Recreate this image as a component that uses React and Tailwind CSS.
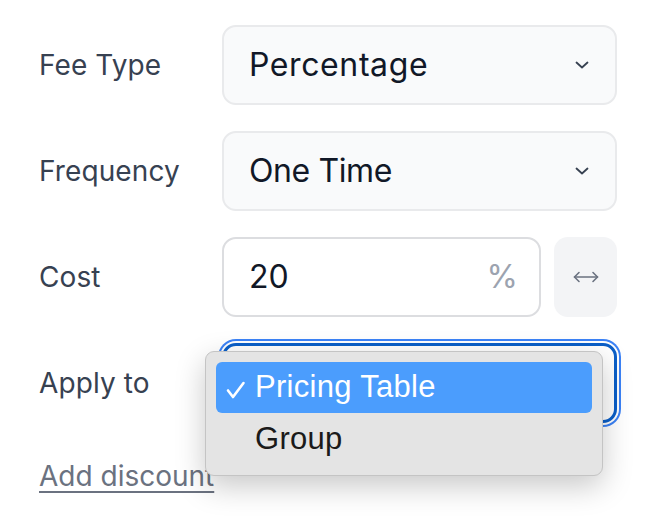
export default function App() {
  const labelCls = "w-[183px] shrink-0 text-[28px] text-[#374151] tracking-[0.1px]"

  return (
    <main className="min-h-screen w-full bg-white pt-[25px] pl-[39px] font-['Inter',sans-serif]">
      <div className="flex flex-col gap-[26px] w-[582px]">
        {/* fee type */}
        <div className="flex items-center">
          <span className={labelCls}>Fee Type</span>
          <div className="flex h-[80px] w-[395px] items-center justify-between rounded-[14px] border-2 border-[#e9eaec] bg-[#f9fafb] pl-[25px] pr-[26px]">
            <span className="text-[32px] text-[#111827] tracking-[0.6px]">Percentage</span>
            <Chevron />
          </div>
        </div>

        {/* frequency */}
        <div className="flex items-center">
          <span className={labelCls}>Frequency</span>
          <div className="flex h-[80px] w-[395px] items-center justify-between rounded-[14px] border-2 border-[#e9eaec] bg-[#f9fafb] pl-[25px] pr-[26px]">
            <span className="text-[32px] text-[#111827] tracking-[-0.4px]">One Time</span>
            <Chevron />
          </div>
        </div>

        {/* cost */}
        <div className="flex items-center">
          <span className={labelCls}>Cost</span>
          <div className="flex h-[80px] w-[319px] items-center justify-between rounded-[14px] border-2 border-[#dcdde0] bg-white pl-[25px] pr-[21px]">
            <span className="text-[32px] text-[#111827]">20</span>
            <span className="text-[32px] text-[#9ca3af]">%</span>
          </div>
          <button className="ml-[13px] flex h-[80px] w-[63px] items-center justify-center rounded-[14px] bg-[#f3f4f6]">
            <svg width="26" height="12" viewBox="0 0 26 12" fill="none" stroke="#6b7280" strokeWidth="1.6" strokeLinecap="round" strokeLinejoin="round">
              <path d="M1.5 6h23" />
              <path d="M6 1.5L1.5 6 6 10.5" />
              <path d="M20 1.5l4.5 4.5-4.5 4.5" />
            </svg>
          </button>
        </div>

        {/* apply to */}
        <div className="relative flex items-center">
          <span className={labelCls}>Apply to</span>
          <div className="h-[80px] w-[395px] rounded-[14px] border-[3px] border-[#0b5fc8] bg-white shadow-[0_0_0_2px_#fff,0_0_0_4px_#3b82f6]" />

          <div className="absolute left-[166px] top-[8px] w-[398px] rounded-[9px] border border-[#c4c4c4] bg-[#e4e4e4] p-[10px] shadow-[0_10px_30px_rgba(0,0,0,0.22)] font-['Liberation_Sans',sans-serif]">
            <div className="flex h-[51px] items-center rounded-[6px] bg-[#4b9dfd] pl-[10px] text-white">
              <svg width="20" height="18" viewBox="0 0 20 18" fill="none" stroke="#fff" strokeWidth="2.6" strokeLinecap="round" strokeLinejoin="round" className="mr-[9px] mt-[4px]">
                <path d="M2 9.5l5 6.5L17.5 2" />
              </svg>
              <span className="text-[31px] tracking-[0.3px]">Pricing Table</span>
            </div>
            <div className="flex h-[52px] items-center pl-[39px] text-[31px] tracking-[0.3px] text-[#1a1a1a]">
              Group
            </div>
          </div>
        </div>
      </div>

      <a href="#" className="mt-[32px] inline-block text-[28px] text-[#6b7280] underline underline-offset-[5px] decoration-[2px]">
        Add discount
      </a>
    </main>
  )
}

function Chevron() {
  return (
    <svg width="14" height="8" viewBox="0 0 14 8" fill="none" stroke="#374151" strokeWidth="1.8" strokeLinecap="round" strokeLinejoin="round">
      <path d="M1.5 1.5L7 6.5l5.5-5" />
    </svg>
  )
}
